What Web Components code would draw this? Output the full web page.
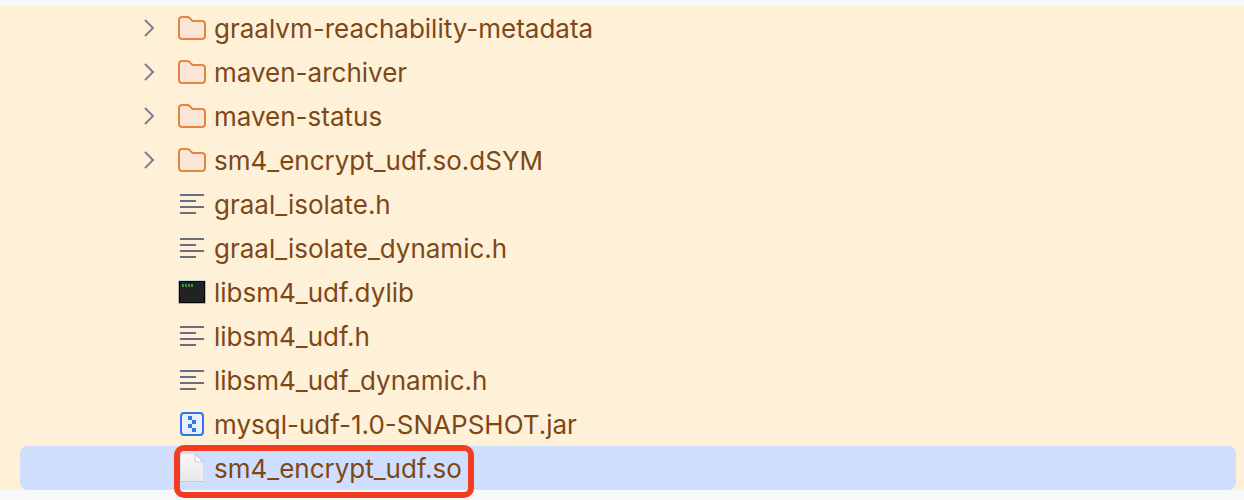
<!DOCTYPE html>
<html lang="en"><head><meta charset="utf-8"><title>Project files</title>
<style>html{background:#f7f8fa}body{box-sizing:border-box;min-height:100vh;margin:0;padding:6px 0 10px;font-family:Inter,sans-serif;color:#7d4817}</style></head><body>
<file-tree>
<file-row kind="folder">graalvm-reachability-metadata</file-row>
<file-row kind="folder">maven-archiver</file-row>
<file-row kind="folder">maven-status</file-row>
<file-row kind="folder">sm4_encrypt_udf.so.dSYM</file-row>
<file-row kind="text">graal_isolate.h</file-row>
<file-row kind="text">graal_isolate_dynamic.h</file-row>
<file-row kind="binary">libsm4_udf.dylib</file-row>
<file-row kind="text">libsm4_udf.h</file-row>
<file-row kind="text">libsm4_udf_dynamic.h</file-row>
<file-row kind="archive">mysql-udf-1.0-SNAPSHOT.jar</file-row>
<file-row kind="file" selected marked>sm4_encrypt_udf.so</file-row>
</file-tree>
<script>
const folder='<svg viewBox="0 0 28 28"><path d="M1 6a3 3 0 0 1 3-3h5.500q1 0 2 1l3 3H24a3 3 0 0 1 3 3v12a3 3 0 0 1-3 3H4a3 3 0 0 1-3-3z" fill="#f9e6d9" stroke="#e88442" stroke-width="2"/></svg>';
const text='<svg viewBox="0 0 28 28"><path d="M2 5h24M2 11h16M2 17h24M2 23h16" stroke="#6c707e" stroke-width="2"/></svg>';
const binary='<svg viewBox="0 0 28 28"><rect x="0" y="3" width="28" height="23" rx="1" fill="#b7b7b0"/><path d="M0 2h28v1H0z" fill="#c5dbe2"/><rect x="1" y="3" width="26" height="22" fill="#050505"/><rect x="2" y="4" width="24" height="20" fill="#222"/><path d="M4 7.500h11" stroke="#399447" stroke-width="3" stroke-dasharray="2 1"/></svg>';
const archive='<svg viewBox="0 0 28 28"><rect x="3" y="3" width="22" height="22" rx="3" fill="#e7effd" stroke="#3574f0" stroke-width="2"/><path d="M10 6h4v4h-4zM14 10h4v4h-4zM10 14h4v4h-4zM14 18h4v4h-4z" fill="#3574f0"/></svg>';
const file='<svg viewBox="0 0 28 28"><defs><linearGradient id="p" x2="0" y2="1"><stop stop-color="#f7f7f7"/><stop offset="1" stop-color="#e9e9e9"/></linearGradient></defs><path d="M4 0h13l8 8v19q0 1-1 1H4q-1 0-1-1V1q0-1 1-1z" fill="url(#p)"/><path d="M3 27q0 1 1 1h20q1 0 1-1" stroke="#aaaeb8"/><path d="M17 0v7q0 1 1 1h7z" fill="#fff" stroke="#c4c5c8"/></svg>';
const icons={folder,text,binary,archive,file};
customElements.define('file-tree',class extends HTMLElement{
  constructor(){super();this.attachShadow({mode:'open'}).innerHTML='<style>:host{display:block;background:#fff1d8;padding:0 8px 0 20px}</style><slot></slot>'}
});
customElements.define('file-row',class extends HTMLElement{
  connectedCallback(){
    const k=this.getAttribute('kind');
    this.attachShadow({mode:'open'}).innerHTML=`<style>
:host{display:flex;align-items:center;height:44px;padding-left:120px;font-size:26px;border-radius:8px}
:host([selected]){background:#cfdefc}
.arrow{width:20px;height:20px;margin-right:18px}
.label{position:relative;display:flex;align-items:center;height:100%;white-space:nowrap}
.icon{width:28px;height:28px;margin-right:8px}
svg{display:block;width:100%;height:100%;fill:none}
:host([marked]) .label::after{content:"";position:absolute;inset:-1px -12px -8px -4px;border:6px solid #f33b20;border-radius:10px}
</style><span class="arrow">${k==='folder'?'<svg viewBox="0 0 20 20"><path d="M5 2l8 8-8 8" stroke="#7c8090" stroke-width="2"/></svg>':''}</span><span class="label"><span class="icon">${icons[k]}</span><slot></slot></span>`}
});
</script></body></html>
